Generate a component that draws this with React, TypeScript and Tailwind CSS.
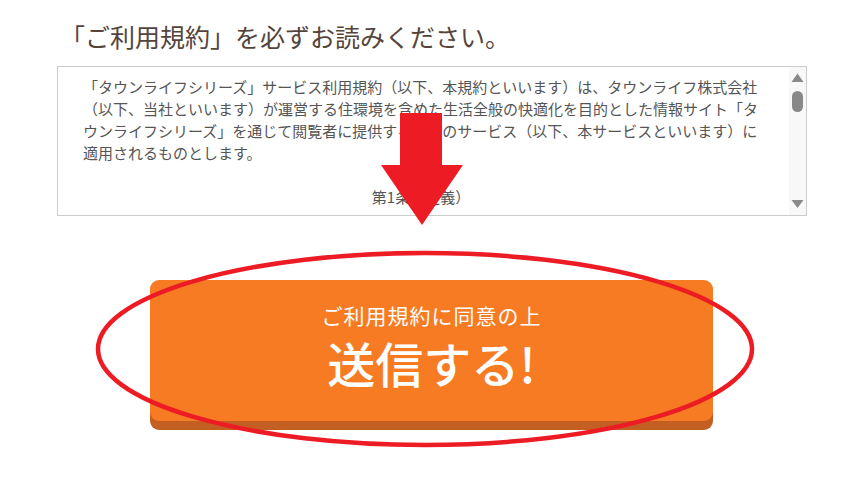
import React from "react";

const jp = { fontFamily: '"Noto Sans CJK JP", "Noto Sans", sans-serif' };

const lines = [
  "「タウンライフシリーズ」サービス利用規約（以下、本規約といいます）は、タウンライフ株式会社",
  "（以下、当社といいます）が運営する住環境を含めた生活全般の快適化を目的とした情報サイト「タ",
  "ウンライフシリーズ」を通じて閲覧者に提供する全てのサービス（以下、本サービスといいます）に",
  "適用されるものとします。",
];

export default function App() {
  return (
    <div className="relative w-[858px] h-[482px] bg-white overflow-hidden" style={jp}>
      <div className="ml-[57px] w-[750px] pt-[20px] flex flex-col">
        <h1 className="text-[25px] leading-[32px] text-[#54443c] pl-[3px] mb-[14px] font-normal">
          「ご利用規約」を必ずお読みください。
        </h1>
        <div className="h-[150px] border border-[#cccccc] flex">
          <div className="flex-1 overflow-hidden pt-[9px] pl-[25px] text-[15px] leading-[22px] text-[#555555]">
            <div className="w-[676px]">
              {lines.map((l, i) => (
                <p key={i} className="whitespace-nowrap">{l}</p>
              ))}
              <p className="h-[22px]"></p>
              <p className="text-center whitespace-nowrap">第1条（定義）</p>
            </div>
          </div>
          <div className="w-[17px] bg-[#f8f8f8] flex flex-col items-center pt-[6px] pb-[7px]">
            <svg width="13" height="9" viewBox="0 0 13 9" className="block">
              <polygon points="0.5,9 12.5,9 6.5,0.5" fill="#8a8a8a" />
            </svg>
            <div className="mt-[9px] w-[11px] h-[21px] rounded-full bg-[#888888]" />
            <div className="flex-1" />
            <svg width="13" height="8" viewBox="0 0 13 8" className="block">
              <polygon points="0.5,0 12.5,0 6.5,8" fill="#8a8a8a" />
            </svg>
          </div>
        </div>
        <div className="mt-[64px] self-center ml-[-1px] w-[563px] h-[141px] rounded-[9px] bg-[#f77b22] shadow-[0_9px_0_#c45f24] flex flex-col items-center pt-[21px] text-white">
          <p className="text-[21px] leading-[28px] tracking-[1px]">ご利用規約に同意の上</p>
          <p className="mt-[5px] text-[48px] leading-[56px] font-medium">送信する!</p>
        </div>
      </div>
      <svg
        className="absolute left-0 top-0 pointer-events-none"
        width="858"
        height="482"
        viewBox="0 0 858 482"
      >
        <rect x="400" y="113" width="42" height="54" fill="#ed1c24" />
        <polygon points="381,165 463,165 422,225" fill="#ed1c24" />
        <ellipse cx="425" cy="349" rx="327" ry="96" fill="none" stroke="#ed1c24" strokeWidth="4.5" />
      </svg>
    </div>
  );
}
